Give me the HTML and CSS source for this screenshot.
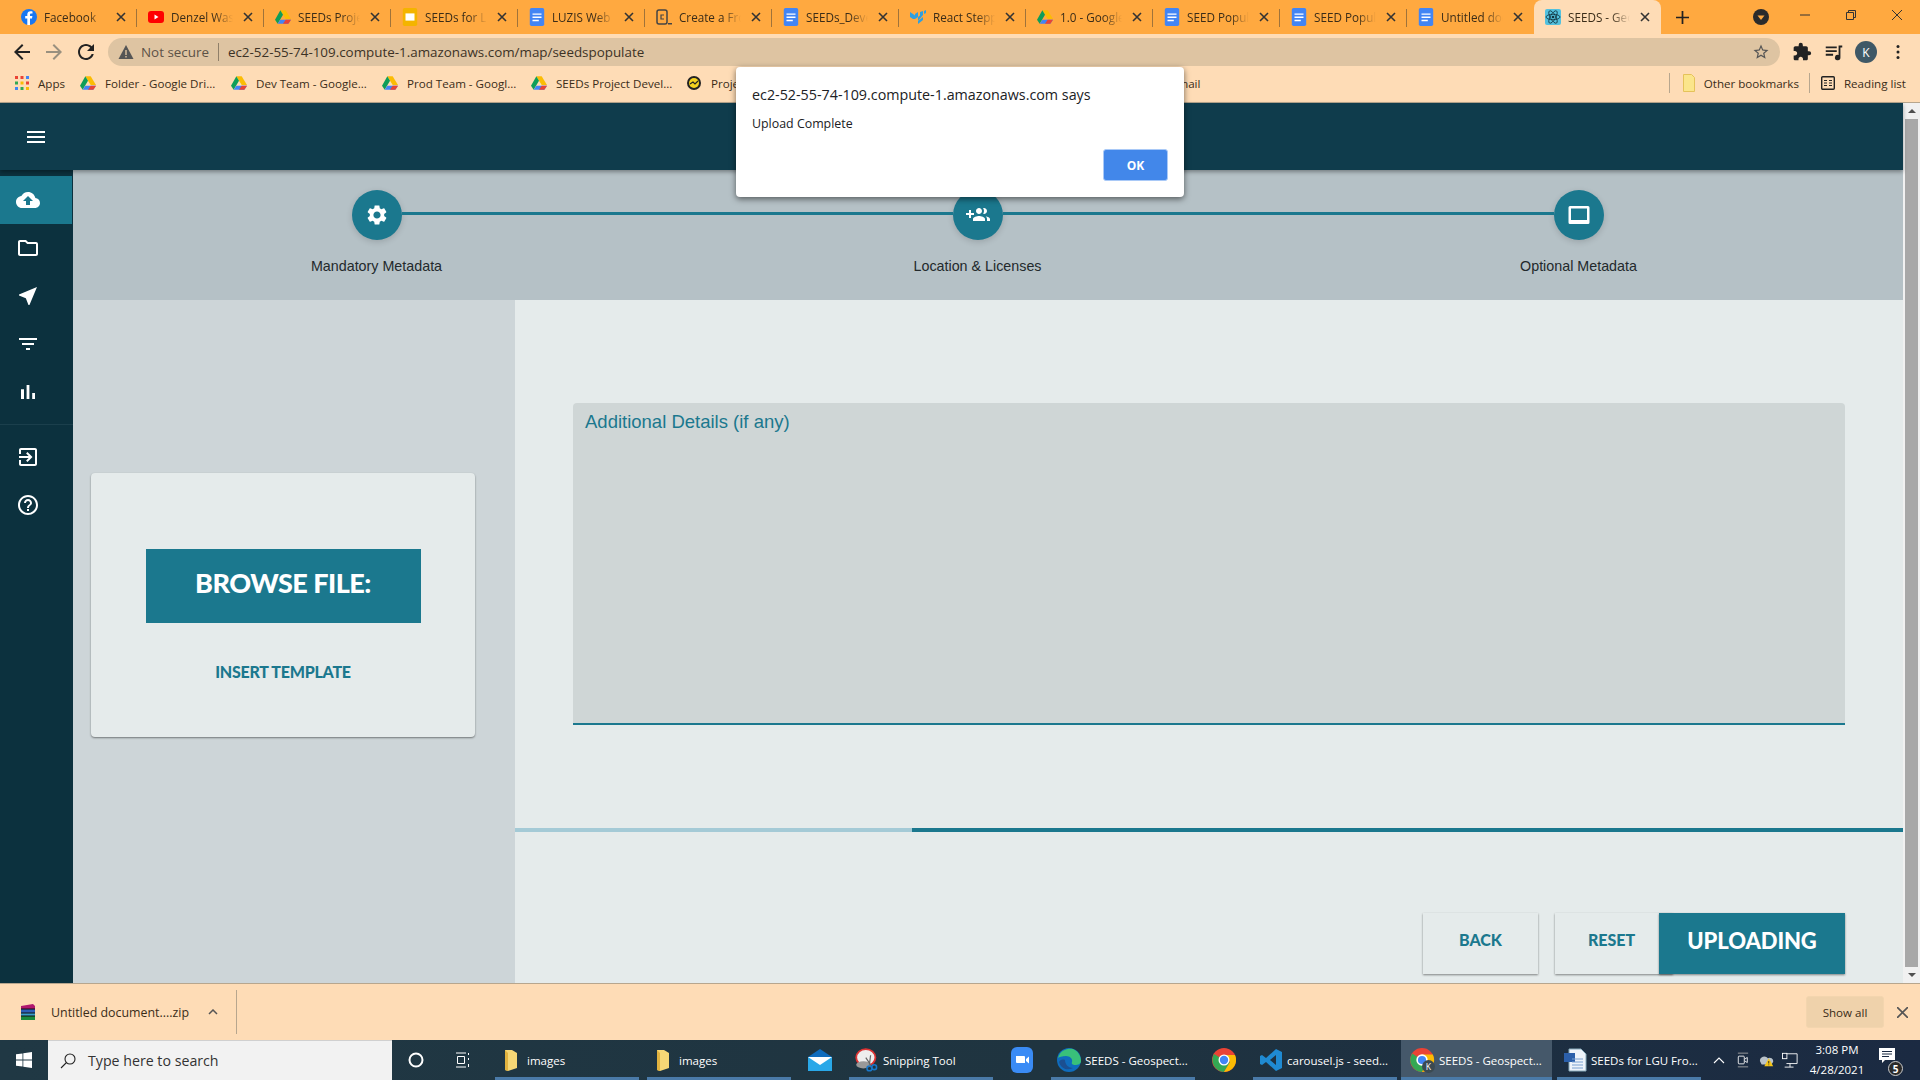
FILE: index.html
```html
<!DOCTYPE html>
<html>
<head>
	<meta charset="utf-8">
	<title>SEEDS - Geospectrum</title>
	<link rel="stylesheet" href="styles.css">
</head>
<body>
	<svg class="defs" width="0" height="0">
		<symbol id="doc" viewBox="0 0 16 20"><rect width="16" height="20" rx="2" fill="#4285f4"/><path d="M3 6h10v1.6H3zM3 9.5h10v1.6H3zM3 13h7v1.6H3z" fill="#fff"/></symbol>
		<symbol id="drive" viewBox="0 0 24 22"><path d="M8 1h8l8 13h-8z" fill="#fbbc04"/><path d="M8 1L0 15l4 6 8-13.500z" fill="#0f9d58"/><path d="M8 15h16l-4 6H4z" fill="#4285f4"/><path d="M16 15h8l-4 6h-8z" fill="#ea4335"/></symbol>
		<symbol id="close" viewBox="0 0 10 10"><path d="M1 1l8 8M9 1l-8 8" stroke="#333" stroke-width="1.600" fill="none"/></symbol>
		<symbol id="wfolder" viewBox="0 0 14 24"><path d="M1 2h7l5 3v15l-9 3-3-1z" fill="#f6d776"/><path d="M1 2v20l3 1V5z" fill="#e2b33f"/></symbol>
	</svg>

	<div class="tabstrip">
		<div class="tab">
			<svg class="fav" viewBox="0 0 16 16"><circle cx="8" cy="8" r="8" fill="#1877f2"/><path d="M9 16V9.500h2l.4-2.400H9V5.700c0-.7.300-1.200 1.300-1.200h1.200V2.400c-.5 0-1.200-.2-2-.2-2 0-3.200 1.200-3.200 3.300v1.600H4.200v2.400h2.100V16z" fill="#fff"/></svg>
			<span class="tabtext">Facebook</span><svg class="x"><use href="#close"/></svg>
		</div>
		<div class="tab">
			<svg class="fav" viewBox="0 0 16 16"><rect y="2" width="16" height="12" rx="3" fill="#f00"/><path d="M6.500 5.500v5l4-2.500z" fill="#fff"/></svg>
			<span class="tabtext">Denzel Washington</span><svg class="x"><use href="#close"/></svg>
		</div>
		<div class="tab">
			<svg class="fav"><use href="#drive"/></svg>
			<span class="tabtext">SEEDs Project</span><svg class="x"><use href="#close"/></svg>
		</div>
		<div class="tab">
			<svg class="fav" viewBox="0 0 16 20"><rect width="16" height="20" rx="2" fill="#f4b400"/><rect x="3" y="6" width="10" height="8" fill="#fff"/></svg>
			<span class="tabtext">SEEDs for LGU</span><svg class="x"><use href="#close"/></svg>
		</div>
		<div class="tab">
			<svg class="fav"><use href="#doc"/></svg>
			<span class="tabtext">LUZIS Web Design</span><svg class="x"><use href="#close"/></svg>
		</div>
		<div class="tab">
			<svg class="fav" viewBox="0 0 16 16"><rect x="1" y="1" width="10" height="14" rx="2" fill="none" stroke="#444" stroke-width="1.500"/><path d="M8 6H5v4h3" fill="none" stroke="#444" stroke-width="1.200"/><path d="M12 14h4v1.500h-4z" fill="#444"/></svg>
			<span class="tabtext">Create a Front</span><svg class="x"><use href="#close"/></svg>
		</div>
		<div class="tab">
			<svg class="fav"><use href="#doc"/></svg>
			<span class="tabtext">SEEDs_Development</span><svg class="x"><use href="#close"/></svg>
		</div>
		<div class="tab">
			<svg class="fav" viewBox="0 0 16 14"><path d="M0 2l3 2v5L0 7zM8 2L5 4v5l3-2zM3 4l2 1.500 0 3.500L3 9zM8 7l2-1.500V2l3-1v4L8 11z" fill="#2f9fe0"/><path d="M14 1l2-1v3l-2 1zM8 11l5-4v3l-5 4z" fill="#2f9fe0"/></svg>
			<span class="tabtext">React Stepper</span><svg class="x"><use href="#close"/></svg>
		</div>
		<div class="tab">
			<svg class="fav"><use href="#drive"/></svg>
			<span class="tabtext">1.0 - Google Drive</span><svg class="x"><use href="#close"/></svg>
		</div>
		<div class="tab">
			<svg class="fav"><use href="#doc"/></svg>
			<span class="tabtext">SEED Populate</span><svg class="x"><use href="#close"/></svg>
		</div>
		<div class="tab">
			<svg class="fav"><use href="#doc"/></svg>
			<span class="tabtext">SEED Populate</span><svg class="x"><use href="#close"/></svg>
		</div>
		<div class="tab nosep">
			<svg class="fav"><use href="#doc"/></svg>
			<span class="tabtext">Untitled document</span><svg class="x"><use href="#close"/></svg>
		</div>
		<div class="tab active">
			<svg class="fav" viewBox="0 0 16 16"><rect width="16" height="16" rx="2" fill="#53c1de"/><g fill="none" stroke="#10333f" stroke-width=".8"><ellipse cx="8" cy="8" rx="7" ry="2.700"/><ellipse cx="8" cy="8" rx="7" ry="2.700" transform="rotate(60 8 8)"/><ellipse cx="8" cy="8" rx="7" ry="2.700" transform="rotate(120 8 8)"/></g><circle cx="8" cy="8" r="1.300" fill="#10333f"/></svg>
			<span class="tabtext">SEEDS - Geospectrum</span><svg class="x"><use href="#close"/></svg>
		</div>
		<svg class="newtab" viewBox="0 0 12 12"><path d="M6 0v12M0 6h12" stroke="#222" stroke-width="1.600"/></svg>
		<div class="spring"></div>
		<svg class="tabsearch" viewBox="0 0 16 16"><circle cx="8" cy="8" r="8" fill="#2b2b2b"/><path d="M4.500 6.500h7L8 11z" fill="#ffa940"/></svg>
		<div class="winbtns">
			<svg viewBox="0 0 46 30"><path d="M18 15h10" stroke="#333"/></svg>
			<svg viewBox="0 0 46 30"><path d="M18.500 12.500h7v7h-7zM20.500 12.500v-2h7v7h-2" fill="none" stroke="#333"/></svg>
			<svg viewBox="0 0 46 30"><path d="M18 10l10 10M28 10L18 20" stroke="#333"/></svg>
		</div>
	</div>

	<div class="toolbar">
		<svg class="tool" viewBox="0 0 24 24"><path d="M20 11H7.830l5.590-5.590L12 4l-8 8 8 8 1.410-1.410L7.830 13H20z" fill="#222"/></svg>
		<svg class="tool" viewBox="0 0 24 24"><path d="M12 4l-1.410 1.410L16.170 11H4v2h12.170l-5.580 5.590L12 20l8-8z" fill="#99907f"/></svg>
		<svg class="tool" viewBox="0 0 24 24"><path d="M17.650 6.350C16.200 4.900 14.210 4 12 4c-4.420 0-7.990 3.580-7.990 8s3.570 8 7.990 8c3.730 0 6.840-2.550 7.730-6h-2.080c-.82 2.330-3.040 4-5.650 4-3.310 0-6-2.690-6-6s2.690-6 6-6c1.660 0 3.140.690 4.220 1.780L13 11h7V4l-2.350 2.350z" fill="#222"/></svg>
		<div class="omnibox">
			<svg class="warn" viewBox="0 0 16 16"><path d="M8 1l7.500 14H.5z" fill="#555"/><path d="M7.300 6h1.400v5H7.300zM7.300 12h1.400v1.400H7.300z" fill="#dec4a2"/></svg>
			<span class="notsecure">Not secure</span>
			<span class="omnisep"></span>
			<span class="url">ec2-52-55-74-109.compute-1.amazonaws.com/map/seedspopulate</span>
			<svg class="star" viewBox="0 0 24 24"><path d="M22 9.240l-7.190-.620L12 2 9.190 8.630 2 9.240l5.460 4.730L5.820 21 12 17.270 18.180 21l-1.630-7.030L22 9.240zM12 15.400l-3.760 2.270 1-4.280-3.320-2.880 4.380-.380L12 6.100l1.710 4.040 4.380.380-3.320 2.880 1 4.280L12 15.400z" fill="#555"/></svg>
		</div>
		<svg class="tool puzzle" viewBox="0 0 24 24"><path d="M20.500 11H19V7c0-1.100-.9-2-2-2h-4V3.500a2.500 2.500 0 0 0-5 0V5H4c-1.100 0-2 .9-2 2v3.800h1.500c1.500 0 2.700 1.200 2.700 2.700S5 16.200 3.500 16.200H2V20c0 1.100.9 2 2 2h3.800v-1.500c0-1.500 1.200-2.700 2.700-2.700s2.700 1.200 2.700 2.700V22H17c1.100 0 2-.9 2-2v-4h1.500a2.500 2.500 0 0 0 0-5z" fill="#222"/></svg>
		<svg class="tool media" viewBox="0 0 24 24"><path d="M3 6h12v2H3zM3 10h12v2H3zM3 14h8v2H3zM17 5h4v2h-2v11a3 3 0 1 1-2-2.800z" fill="#222"/></svg>
		<span class="avatar">K</span>
		<svg class="tool dots" viewBox="0 0 24 24"><circle cx="12" cy="5.500" r="1.800" fill="#222"/><circle cx="12" cy="12" r="1.800" fill="#222"/><circle cx="12" cy="18.500" r="1.800" fill="#222"/></svg>
	</div>

	<div class="bookmarks">
		<svg class="grid" viewBox="0 0 14 14"><g fill="#ea4335"><rect width="3" height="3"/><rect x="5.500" width="3" height="3"/></g><rect x="11" width="3" height="3" fill="#4285f4"/><rect y="5.500" width="3" height="3" fill="#34a853"/><rect x="5.500" y="5.500" width="3" height="3" fill="#fbbc04"/><rect x="11" y="5.500" width="3" height="3" fill="#ea4335"/><rect y="11" width="3" height="3" fill="#4285f4"/><rect x="5.500" y="11" width="3" height="3" fill="#34a853"/><rect x="11" y="11" width="3" height="3" fill="#fbbc04"/></svg>
		<span class="bm bm-apps">Apps</span>
		<svg class="bmfav"><use href="#drive"/></svg><span class="bm bm-1">Folder - Google Dri...</span>
		<svg class="bmfav"><use href="#drive"/></svg><span class="bm bm-2">Dev Team - Google...</span>
		<svg class="bmfav"><use href="#drive"/></svg><span class="bm bm-3">Prod Team - Googl...</span>
		<svg class="bmfav"><use href="#drive"/></svg><span class="bm bm-4">SEEDs Project Devel...</span>
		<svg class="bmfav" viewBox="0 0 16 16"><circle cx="8" cy="8" r="7" fill="#222"/><circle cx="8" cy="8" r="5" fill="#f4d21f"/><path d="M4 9l3-2 2 2 3-3" fill="none" stroke="#222" stroke-width="1.200"/></svg><span class="bm bm-5">Project Management</span>
		<span class="bm bm-6">Gmail</span>
		<div class="spring"></div>
		<span class="bmsep sep-a"></span>
		<svg class="bmfolder" viewBox="0 0 12 18"><path d="M.5.5h8l3 3v14H.5z" fill="#fbe58b" stroke="#e5c25a"/></svg>
		<span class="bm bm-other">Other bookmarks</span>
		<span class="bmsep"></span>
		<svg class="bmread" viewBox="0 0 14 14"><rect x=".7" y=".7" width="12.600" height="12.600" rx="1" fill="none" stroke="#222" stroke-width="1.400"/><path d="M3 4h3v1H3zM3 6.500h3v1H3zM3 9h3v1H3zM8 4h3v1H8zM8 6.500h3v1H8zM8 9h3v1H8z" fill="#222"/></svg>
		<span class="bm">Reading list</span>
	</div>

	<div class="viewport">
		<div class="app">
			<header class="appbar">
				<svg class="burger" viewBox="0 0 18 12"><path d="M0 0h18v2H0zM0 5h18v2H0zM0 10h18v2H0z" fill="#fff"/></svg>
			</header>
			<div class="appbody">
				<nav class="sidebar">
					<a class="navitem on"><svg viewBox="0 0 24 24"><path d="M19.350 10.040C18.670 6.590 15.640 4 12 4 9.110 4 6.600 5.640 5.350 8.040 2.340 8.360 0 10.910 0 14c0 3.310 2.690 6 6 6h13c2.760 0 5-2.240 5-5 0-2.640-2.050-4.780-4.650-4.960zM14 13v4h-4v-4H7l5-5 5 5h-3z"/></svg></a>
					<a class="navitem"><svg viewBox="0 0 24 24"><path d="M9.170 6l2 2H20v10H4V6h5.170M10 4H4c-1.100 0-1.990.9-1.990 2L2 18c0 1.100.9 2 2 2h16c1.100 0 2-.9 2-2V8c0-1.100-.9-2-2-2h-8l-2-2z"/></svg></a>
					<a class="navitem"><svg viewBox="0 0 24 24"><path d="M21 3L3 10.530v.98l6.840 2.650L12.480 21h.98L21 3z"/></svg></a>
					<a class="navitem"><svg viewBox="0 0 24 24"><path d="M10 18h4v-2h-4v2zM3 6v2h18V6H3zm3 7h12v-2H6v2z"/></svg></a>
					<a class="navitem"><svg viewBox="0 0 24 24"><path d="M5 9.200h3V19H5zM10.600 5h2.800v14h-2.800zm5.600 8H19v6h-2.800z"/></svg></a>
					<div class="navdivider"></div>
					<a class="navitem"><svg viewBox="0 0 24 24"><path d="M10.090 15.590L11.500 17l5-5-5-5-1.410 1.410L12.670 11H3v2h9.670l-2.580 2.590zM19 3H5c-1.110 0-2 .9-2 2v4h2V5h14v14H5v-4H3v4c0 1.100.89 2 2 2h14c1.100 0 2-.9 2-2V5c0-1.100-.9-2-2-2z"/></svg></a>
					<a class="navitem"><svg viewBox="0 0 24 24"><path d="M11 18h2v-2h-2v2zm1-16C6.480 2 2 6.480 2 12s4.480 10 10 10 10-4.480 10-10S17.520 2 12 2zm0 18c-4.410 0-8-3.590-8-8s3.590-8 8-8 8 3.590 8 8-3.590 8-8 8zm0-14c-2.210 0-4 1.790-4 4h2c0-1.100.9-2 2-2s2 .9 2 2c0 2-3 1.750-3 5h2c0-2.250 3-2.500 3-5 0-2.210-1.790-4-4-4z"/></svg></a>
				</nav>
				<main class="content">
					<section class="stepper">
						<div class="step">
							<span class="stepicon"><svg viewBox="0 0 24 24"><path d="M19.140 12.940c.04-.3.060-.61.060-.94 0-.32-.02-.64-.07-.94l2.030-1.580c.18-.14.230-.41.120-.61l-1.920-3.320c-.12-.22-.37-.29-.59-.22l-2.390.96c-.5-.38-1.030-.7-1.620-.94l-.36-2.540c-.04-.24-.24-.41-.48-.41h-3.840c-.24 0-.43.170-.47.410l-.36 2.540c-.59.240-1.130.570-1.620.940l-2.390-.96c-.22-.08-.47 0-.59.220L2.740 8.870c-.12.210-.08.470.120.610l2.030 1.580c-.05.3-.09.630-.09.940s.02.640.07.940l-2.030 1.580c-.18.140-.23.410-.12.610l1.920 3.320c.12.220.37.290.59.220l2.390-.96c.5.380 1.030.7 1.620.94l.36 2.540c.05.240.24.41.48.41h3.840c.24 0 .44-.17.47-.41l.36-2.540c.59-.24 1.130-.56 1.620-.94l2.390.96c.22.080.47 0 .59-.22l1.920-3.320c.12-.22.070-.47-.12-.61l-2.010-1.580zM12 15.600c-1.980 0-3.600-1.620-3.600-3.600s1.620-3.600 3.600-3.600 3.600 1.620 3.600 3.600-1.620 3.600-3.600 3.600z"/></svg></span>
							<span class="steplabel">Mandatory Metadata</span>
						</div>
						<div class="step joined">
							<span class="stepicon"><svg viewBox="0 0 24 24"><path d="M8 10H5V7H3v3H0v2h3v3h2v-3h3v-2zm10 1c1.660 0 2.990-1.340 2.990-3S19.660 5 18 5c-.32 0-.63.050-.91.140.57.810.9 1.790.9 2.860s-.34 2.040-.9 2.860c.28.090.59.140.91.140zm-5 0c1.660 0 2.990-1.340 2.990-3S14.660 5 13 5s-3 1.340-3 3 1.340 3 3 3zm6.620 2.160c.83.730 1.380 1.660 1.380 2.840v2h3v-2c0-1.540-2.370-2.490-4.380-2.840zM13 13c-2 0-6 1-6 3v2h12v-2c0-2-4-3-6-3z"/></svg></span>
							<span class="steplabel">Location &amp; Licenses</span>
						</div>
						<div class="step joined">
							<span class="stepicon"><svg viewBox="0 0 24 24"><path fill-rule="evenodd" d="M3 3h18a1.500 1.500 0 0 1 1.500 1.500v15a1.500 1.500 0 0 1-1.500 1.500H3a1.500 1.500 0 0 1-1.500-1.500v-15A1.500 1.500 0 0 1 3 3zm1 2.500V17h16V5.500z"/></svg></span>
							<span class="steplabel">Optional Metadata</span>
						</div>
					</section>
					<div class="panels">
						<aside class="leftpanel">
							<div class="card">
								<button class="browse">BROWSE FILE:</button>
								<div class="template">INSERT TEMPLATE</div>
							</div>
						</aside>
						<section class="rightpanel">
							<div class="details">Additional Details (if any)</div>
							<div class="progress"><span class="progress-done"></span></div>
							<div class="actions">
								<button class="btn back">BACK</button>
								<button class="btn reset">RESET</button>
								<button class="btn upload">UPLOADING</button>
							</div>
						</section>
					</div>
				</main>
			</div>
		</div>
		<div class="scrollbar">
			<span class="arrow-up"></span>
			<span class="thumb"></span>
			<span class="arrow-down"></span>
		</div>
	</div>

	<div class="downloads">
		<svg class="rar" viewBox="0 0 16 18"><path d="M1 3l12-2 2 2v3H1z" fill="#b0186e"/><path d="M1 6h14v4H1z" fill="#2d5fb8"/><path d="M1 10h14v3H1z" fill="#3a9ecb"/><path d="M1 13h14v4H1z" fill="#1a8a3c"/><path d="M1 6h14M1 10h14M1 13h14" stroke="#111"/></svg>
		<span class="dlname">Untitled document....zip</span>
		<svg class="dlchev" viewBox="0 0 10 6"><path d="M1 5l4-4 4 4" fill="none" stroke="#555" stroke-width="1.500"/></svg>
		<span class="dlsep"></span>
		<div class="spring"></div>
		<button class="showall">Show all</button>
		<svg class="dlclose" viewBox="0 0 10 10"><path d="M0 0l10 10M10 0L0 10" stroke="#555" stroke-width="1.500"/></svg>
	</div>

	<div class="taskbar">
		<svg class="startbtn" viewBox="0 0 16 16"><path d="M0 2.300l6.500-.9v6.200H0zM7.300 1.300L16 0v7.600H7.300zM0 8.400h6.500v6.200L0 13.700zM7.300 8.400H16V16l-8.700-1.300z" fill="#fff"/></svg>
		<div class="searchbox">
			<svg viewBox="0 0 16 16"><circle cx="10" cy="6" r="5" fill="none" stroke="#222" stroke-width="1.100"/><path d="M6.500 9.500L1 15" stroke="#222" stroke-width="1.100"/></svg>
			<span>Type here to search</span>
		</div>
		<svg class="tb-cortana" viewBox="0 0 16 16"><circle cx="8" cy="8" r="6.500" fill="none" stroke="#fff" stroke-width="2"/></svg>
		<svg class="tb-taskview" viewBox="0 0 16 16"><path d="M1 1h10M1 15h10M2.500 4.500h7v7h-7zM13.500 1v2M13.500 6v2M13.500 12v3" fill="none" stroke="#fff"/></svg>
		<div class="tbitem run w1"><svg><use href="#wfolder"/></svg><span>images</span></div>
		<div class="tbitem run w1"><svg><use href="#wfolder"/></svg><span>images</span></div>
		<svg class="tb-mail" viewBox="0 0 24 22"><path d="M0 8l12-8 12 8z" fill="#0f6cbd"/><path d="M0 8h24v14H0z" fill="#29a8e8"/><path d="M0 8h24l-12 8z" fill="#fff"/></svg>
		<div class="tbitem run w1 snip"><svg viewBox="0 0 20 20"><ellipse cx="9" cy="8" rx="8" ry="7" fill="#eee" stroke="#d33" stroke-width="1.500"/><ellipse cx="7" cy="14" rx="6" ry="3" fill="#999"/><path d="M9 8l4 6M13 6l-1 8" stroke="#666"/><circle cx="12" cy="17" r="2" fill="none" stroke="#1877c9" stroke-width="1.300"/><circle cx="16" cy="16" r="2" fill="none" stroke="#1877c9" stroke-width="1.300"/></svg><span>Snipping Tool</span></div>
		<svg class="tb-zoom" viewBox="0 0 22 26"><rect width="22" height="26" rx="6" fill="#3a8bf5"/><path d="M5 9h8a1 1 0 0 1 1 1v6H6a1 1 0 0 1-1-1zM15 12l3-2.500v7L15 14z" fill="#fff"/></svg>
		<div class="tbitem run w1 edge"><svg viewBox="0 0 24 24"><circle cx="12" cy="12" r="12" fill="#0f6cbd"/><path d="M1 10C3 2 11 0 16 1c5 2 8 7 8 12 0 3-3 4-6 4-2 0-4-1-3-3 1-3-2-6-6-6-4 0-7 1-8 2z" fill="#39c07a"/><path d="M8 12c0 5 4 8 8 8-5 3-12 1-14-6 1-2 3-3 6-2z" fill="#1b4f91"/></svg><span>SEEDS - Geospect...</span></div>
		<svg class="tb-chrome" viewBox="0 0 24 24"><circle cx="12" cy="12" r="12" fill="#ea4335"/><path d="M12 12L2 6A12 12 0 0 0 12 24l6-10z" fill="#34a853"/><path d="M12 7h11a12 12 0 0 1-11 17l6-10z" fill="#fbbc04"/><circle cx="12" cy="12" r="5.500" fill="#fff"/><circle cx="12" cy="12" r="4.200" fill="#4285f4"/></svg>
		<div class="tbitem run w1 code"><svg viewBox="0 0 24 24"><path d="M17 1l6 3v16l-6 3-10-9-4 3-2-1V8l2-1 4 3zM17 7l-6 5 6 5z" fill="#1f8ad2"/></svg><span>carousel.js - seed...</span></div>
		<div class="tbitem run current"><svg viewBox="0 0 24 24"><circle cx="12" cy="12" r="11" fill="#ea4335"/><path d="M12 12L3 6A11 11 0 0 0 12 23l5-9z" fill="#34a853"/><path d="M12 7h10a11 11 0 0 1-10 16l5-9z" fill="#fbbc04"/><circle cx="12" cy="12" r="4.500" fill="#4285f4" stroke="#fff" stroke-width="1.500"/><circle cx="18" cy="18" r="6" fill="#3b4a52"/><text x="18" y="21" font-size="8" fill="#fff" text-anchor="middle" font-family="Open Sans">K</text></svg><span>SEEDS - Geospect...</span></div>
		<div class="tbitem run w1 word"><svg viewBox="0 0 24 24"><path d="M6 1h12l5 5v17H6z" fill="#eef3fa" stroke="#8ab"/><rect x="1" y="5" width="11" height="9" fill="#2b5faa"/><path d="M9 11h11M9 14h11M9 17h11M9 20h11" stroke="#7aa0d0"/></svg><span>SEEDs for LGU Fro...</span></div>
		<div class="tray">
			<svg class="tr-chev" viewBox="0 0 12 8"><path d="M1 7l5-5 5 5" fill="none" stroke="#fff" stroke-width="1.100"/></svg>
			<svg class="tr-meet" viewBox="0 0 14 18"><path d="M1 1h12M1 17h12" stroke="#aaa"/><rect x="1.500" y="4.500" width="7" height="9" rx="1" fill="none" stroke="#fff"/><path d="M9 8l3-2v6l-3-2" fill="none" stroke="#fff"/></svg>
			<svg class="tr-cloud" viewBox="0 0 18 16"><path d="M1 9a5 5 0 0 1 9-3 4 4 0 0 1 6 4l-2 3H3z" fill="#b9c2c9"/><path d="M11 6l5 9H6z" fill="#f5c518"/><path d="M10.500 9h1v3h-1zM10.500 13h1v1h-1z" fill="#222"/></svg>
			<svg class="tr-net" viewBox="0 0 18 18"><path d="M5 2h12v11H5M3 17h10M9 13v4" fill="none" stroke="#fff"/><rect x=".5" y="1.500" width="5" height="6" fill="#1b2a42" stroke="#fff"/></svg>
			<div class="clock"><span>3:08 PM</span><span>4/28/2021</span></div>
			<div class="notify">
				<svg viewBox="0 0 16 16"><path d="M0 0h16v12H6l-3 3v-3H0z" fill="#fff"/><path d="M3 3.500h10M3 6h10M3 8.500h7" stroke="#1b2a42"/></svg>
				<span class="notifybadge">5</span>
			</div>
		</div>
	</div>

	<div class="alert">
		<div class="alert-title">ec2-52-55-74-109.compute-1.amazonaws.com says</div>
		<div class="alert-msg">Upload Complete</div>
		<div class="alert-foot"><button class="alert-ok">OK</button></div>
	</div>
</body>
</html>
```

FILE: styles.css
```css
* {
	box-sizing: border-box;
}

html, body {
	margin: 0;
	height: 100%;
	overflow: hidden;
}

body {
	display: flex;
	flex-direction: column;
	height: 1080px;
	font-family: "Open Sans", sans-serif;
	color: #222;
}

.defs {
	position: absolute;
}

.spring {
	flex: 1;
}

/* browser chrome */
.tabstrip {
	display: flex;
	align-items: center;
	height: 34px;
	padding-left: 10px;
	background: #ffa940;
	flex-shrink: 0;
}

.tab {
	position: relative;
	display: flex;
	align-items: center;
	width: 127px;
	height: 34px;
	padding-left: 11px;
	font-size: 11.700px;
}

.tab::after {
	content: "";
	position: absolute;
	right: 0;
	top: 9px;
	height: 18px;
	width: 1px;
	background: #a0733a;
}

.tab.nosep::after, .tab.active::after {
	display: none;
}

.tab.active {
	background: #fedcb6;
	border-radius: 8px 8px 0 0;
}

.fav {
	width: 16px;
	height: 18px;
	flex-shrink: 0;
}

.tabtext {
	width: 62px;
	margin-left: 7px;
	white-space: nowrap;
	overflow: hidden;
	-webkit-mask-image: linear-gradient(to right, #000 70%, transparent);
	mask-image: linear-gradient(to right, #000 70%, transparent);
	color: #3a2c18;
}

.x {
	width: 10px;
	height: 10px;
	margin-left: 10px;
}

.newtab {
	width: 13px;
	height: 13px;
	margin-left: 15px;
}

.tabsearch {
	width: 16px;
	height: 16px;
	margin-right: 13px;
}

.winbtns {
	display: flex;
	align-self: flex-start;
}

.winbtns svg {
	width: 46px;
	height: 30px;
}

.toolbar {
	display: flex;
	align-items: center;
	height: 32px;
	padding: 4px 0 0 10px;
	background: #fedcb6;
	flex-shrink: 0;
}

.tool {
	width: 24px;
	height: 24px;
	margin-right: 8px;
	flex-shrink: 0;
}

.omnibox {
	display: flex;
	align-items: center;
	width: 1672px;
	height: 28px;
	margin: 0 8px 0 2px;
	padding: 0 0 0 10px;
	border-radius: 14px;
	background: #dec4a2;
	font-size: 13.400px;
}

.warn {
	width: 16px;
	height: 16px;
}

.notsecure {
	margin-left: 7px;
	color: #5c5246;
}

.omnisep {
	width: 1px;
	height: 18px;
	margin: 0 9px;
	background: #8f7f69;
}

.url {
	flex: 1;
	color: #3c3225;
}

.star {
	width: 18px;
	height: 18px;
	margin-right: 10px;
}

.puzzle {
	width: 20px;
	height: 20px;
	margin-left: 4px;
	margin-right: 11px;
}

.media {
	width: 22px;
	height: 22px;
	margin-right: 10px;
}

.avatar {
	display: flex;
	align-items: center;
	justify-content: center;
	width: 22px;
	height: 22px;
	margin-right: 11px;
	border-radius: 50%;
	background: #3f5866;
	color: #fff;
	font-size: 12px;
}

.dots {
	width: 20px;
	height: 20px;
	margin: 0;
}

.bookmarks {
	display: flex;
	align-items: center;
	height: 37px;
	padding: 0 14px 2px 15px;
	background: #fedcb6;
	border-bottom: 1px solid #b7a68e;
	font-size: 11.600px;
	flex-shrink: 0;
}

.grid {
	width: 14px;
	height: 14px;
	margin-right: 9px;
}

.bm {
	white-space: nowrap;
	color: #3a2c18;
}

.bmfav {
	width: 16px;
	height: 16px;
	margin-right: 9px;
	flex-shrink: 0;
}

.bm-apps { width: 42px; }
.bm-1 { width: 126px; }
.bm-2 { width: 126px; }
.bm-3 { width: 124px; }
.bm-4 { width: 130px; }
.bm-5 { width: 130px; }
.bm-6 { width: 60px; margin-left: 328px; }

.bmsep {
	width: 1px;
	height: 20px;
	background: #b7a68e;
}

.bmfolder {
	width: 12px;
	height: 18px;
	margin: 0 9px 0 13px;
}

.bm-other {
	margin-right: 10px;
}

.bmread {
	width: 14px;
	height: 14px;
	margin: 0 9px 0 11px;
}

/* page */
.viewport {
	display: flex;
	flex: 1;
	min-height: 0;
}

.app {
	display: flex;
	flex-direction: column;
	flex: 1;
	min-width: 0;
}

.appbar {
	position: relative;
	z-index: 2;
	display: flex;
	align-items: center;
	height: 67px;
	padding-left: 27px;
	background: #0f3c4c;
	box-shadow: 0 2px 4px rgba(0, 0, 0, .35);
	flex-shrink: 0;
}

.burger {
	width: 18px;
	height: 12px;
}

.appbody {
	display: flex;
	flex: 1;
	min-height: 0;
}

.sidebar {
	width: 73px;
	padding-top: 6px;
	background: #0c313e;
	flex-shrink: 0;
}

.navitem {
	display: flex;
	align-items: center;
	height: 48px;
	padding-left: 16px;
}

.navitem svg {
	width: 24px;
	height: 24px;
	fill: #fff;
}

.navitem.on {
	width: 72px;
	background: #1b788e;
}

.navdivider {
	height: 1px;
	margin: 8px 0;
	background: #1b3f4c;
}

.content {
	display: flex;
	flex-direction: column;
	flex: 1;
	min-width: 0;
}

.stepper {
	display: flex;
	height: 130px;
	padding: 20px 24px 0 3px;
	background: #b5c1c6;
	flex-shrink: 0;
}

.step {
	position: relative;
	display: flex;
	flex-direction: column;
	align-items: center;
	flex: 1;
}

.step.joined::before {
	content: "";
	position: absolute;
	top: 22px;
	left: calc(-50% + 25px);
	right: calc(50% + 25px);
	height: 3px;
	background: #1b788e;
}

.stepicon {
	display: flex;
	align-items: center;
	justify-content: center;
	width: 50px;
	height: 50px;
	border-radius: 50%;
	background: #1b788e;
	box-shadow: 0 2px 6px rgba(0, 0, 0, .15);
}

.stepicon svg {
	width: 24px;
	height: 24px;
	fill: #fff;
}

.steplabel {
	margin-top: 16px;
	font-family: "Liberation Sans", sans-serif;
	font-size: 14.300px;
	line-height: 20px;
	color: #23292c;
}

.panels {
	display: flex;
	flex: 1;
	min-height: 0;
}

.leftpanel {
	width: 442px;
	padding: 173px 0 0 18px;
	background: #cdd5d8;
	flex-shrink: 0;
}

.card {
	display: flex;
	flex-direction: column;
	align-items: center;
	width: 384px;
	height: 264px;
	padding-top: 76px;
	border-radius: 4px;
	background: #e5ebeb;
	box-shadow: 0 1px 2px rgba(0, 0, 0, .45);
}

.browse {
	width: 275px;
	height: 74px;
	padding: 0 0 7px;
	border: 0;
	background: #1b788e;
	color: #fff;
	font-family: "Lato", sans-serif;
	font-size: 27px;
	font-weight: 900;
	letter-spacing: -.5px;
}

.template {
	margin-top: 38px;
	font-family: "Lato", sans-serif;
	font-size: 16px;
	font-weight: 900;
	line-height: 22px;
	letter-spacing: -.25px;
	color: #1b788e;
}

.rightpanel {
	flex: 1;
	min-width: 0;
	padding-top: 103px;
	background: #e5ebeb;
}

.details {
	height: 322px;
	margin: 0 58px 0 58px;
	padding: 8px 12px;
	border-radius: 4px 4px 0 0;
	background: #cfd6d6;
	border-bottom: 2px solid #1b788e;
	font-family: "Liberation Sans", sans-serif;
	font-size: 18.500px;
	line-height: 22px;
	color: #1b788e;
}

.progress {
	height: 4px;
	margin-top: 103px;
	background: #1b788e;
}

.progress-done {
	display: block;
	width: 397px;
	height: 4px;
	background: #a4cad6;
}

.actions {
	display: flex;
	justify-content: flex-end;
	margin: 81px 58px 0 0;
}

.btn {
	height: 61px;
	padding: 0 0 8px;
	border: 0;
	background: #e5ebeb;
	box-shadow: 0 1px 2px rgba(0, 0, 0, .45);
	color: #1b788e;
	font-family: "Lato", sans-serif;
	font-size: 16px;
	font-weight: 900;
}

.back {
	width: 115px;
	margin-right: 17px;
}

.reset {
	width: 118px;
	padding-right: 5px;
	margin-right: -14px;
}

.upload {
	position: relative;
	width: 186px;
	padding-bottom: 6px;
	background: #1b788e;
	color: #fff;
	font-size: 22px;
	letter-spacing: -.1px;
}

.scrollbar {
	display: flex;
	flex-direction: column;
	align-items: center;
	width: 17px;
	background: #f1f1f1;
	flex-shrink: 0;
}

.arrow-up, .arrow-down {
	width: 0;
	height: 0;
	margin: 6px 0;
	border-left: 4px solid transparent;
	border-right: 4px solid transparent;
}

.arrow-up {
	border-bottom: 4px solid #505050;
}

.arrow-down {
	border-top: 4px solid #505050;
}

.thumb {
	flex: 1;
	width: 13px;
	background: #a8a8a8;
}

/* download shelf */
.downloads {
	display: flex;
	align-items: center;
	height: 57px;
	padding: 0 12px 0 20px;
	background: #fedcb6;
	border-top: 1px solid #b7a68e;
	flex-shrink: 0;
}

.rar {
	width: 16px;
	height: 18px;
}

.dlname {
	width: 137px;
	margin-left: 15px;
	font-size: 12.400px;
	white-space: nowrap;
	color: #3a2c18;
}

.dlchev {
	width: 10px;
	height: 6px;
	margin-left: 20px;
}

.dlsep {
	width: 1px;
	height: 44px;
	margin-left: 18px;
	background: #b7a68e;
}

.showall {
	width: 78px;
	height: 32px;
	padding: 0;
	border: 1px solid #f3d5ae;
	border-radius: 3px;
	background: #efd2ab;
	font-family: "Open Sans", sans-serif;
	font-size: 11.600px;
	color: #3a2c18;
}

.dlclose {
	width: 11px;
	height: 11px;
	margin: 0 0 0 13px;
}

/* windows taskbar */
.taskbar {
	display: flex;
	align-items: center;
	height: 40px;
	padding-left: 16px;
	background: linear-gradient(to right, #203844, #1f3440 55%, #1b2a42);
	color: #fff;
	font-size: 11.500px;
	flex-shrink: 0;
}

.startbtn {
	width: 16px;
	height: 16px;
	margin-right: 16px;
}

.searchbox {
	display: flex;
	align-items: center;
	width: 344px;
	height: 40px;
	padding-left: 12px;
	background: #f2f2f2;
	border-top: 1px solid #d0d0d0;
	color: #333;
	font-size: 14.200px;
}

.searchbox svg {
	width: 16px;
	height: 16px;
	margin-right: 12px;
}

.tb-cortana {
	width: 16px;
	height: 16px;
	margin: 0 0 0 16px;
}

.tb-taskview {
	width: 16px;
	height: 16px;
	margin: 0 24px 0 31px;
}

.tbitem {
	display: flex;
	align-items: center;
	height: 40px;
	flex-shrink: 0;
	white-space: nowrap;
}

.tbitem.run {
	border-bottom: 3px solid #4a7aa8;
	padding-top: 3px;
}

.tbitem svg {
	width: 14px;
	height: 24px;
	margin: 0 9px;
	flex-shrink: 0;
}

.w1 {
	width: 144px;
	margin-right: 8px;
}

.tb-mail {
	width: 24px;
	height: 22px;
	margin-left: 9px;
	margin-right: 17px;
	flex-shrink: 0;
}

.snip svg, .edge svg, .code svg, .word svg {
	width: 24px;
	height: 24px;
	margin: 0 4px 0 6px;
}

.tb-zoom {
	width: 22px;
	height: 26px;
	margin: 0 18px 0 10px;
	flex-shrink: 0;
}

.tb-chrome {
	width: 24px;
	height: 24px;
	margin: 0 17px 0 9px;
	flex-shrink: 0;
}

.code {
	margin-right: 4px;
}

.current {
	width: 151px;
	margin-right: 5px;
	background: #45586a;
}

.current svg {
	width: 26px;
	height: 26px;
	margin: 0 4px 0 8px;
}

.tray {
	display: flex;
	align-items: center;
	flex: 1;
	min-width: 0;
}

.tr-chev {
	width: 12px;
	height: 8px;
	margin-left: 4px;
}

.tr-meet {
	width: 12px;
	height: 18px;
	margin-left: 12px;
}

.tr-cloud {
	width: 16px;
	height: 16px;
	margin-left: 10px;
}

.tr-net {
	width: 16px;
	height: 16px;
	margin-left: 7px;
}

.clock {
	display: flex;
	flex-direction: column;
	align-items: center;
	width: 62px;
	margin-left: 8px;
	line-height: 20px;
}

.notify {
	position: relative;
	width: 24px;
	height: 24px;
	margin-left: 8px;
}

.notify svg {
	width: 16px;
	height: 16px;
	margin-left: 3px;
}

.notifybadge {
	position: absolute;
	right: -3px;
	bottom: -4px;
	display: flex;
	align-items: center;
	justify-content: center;
	width: 15px;
	height: 15px;
	border: 1px solid #ccc;
	border-radius: 50%;
	background: #2a2a2a;
	font-size: 10px;
	font-weight: 700;
}

/* browser alert */
.alert {
	position: absolute;
	z-index: 10;
	left: 736px;
	top: 67px;
	width: 448px;
	height: 130px;
	padding: 16px;
	border-radius: 4px;
	background: #fff;
	box-shadow: 0 2px 6px rgba(0, 0, 0, .55);
}

.alert-title {
	font-size: 14.300px;
	line-height: 24px;
	color: #202124;
}

.alert-msg {
	margin-top: 8px;
	font-size: 12.400px;
	line-height: 18px;
	color: #202124;
}

.alert-foot {
	display: flex;
	justify-content: flex-end;
	margin-top: 16px;
}

.alert-ok {
	width: 65px;
	height: 32px;
	padding: 0;
	border: 1px solid #a9c9f7;
	border-radius: 3px;
	background: #4287ea;
	color: #fff;
	font-family: "Open Sans", sans-serif;
	font-size: 12px;
	font-weight: 700;
}
```
